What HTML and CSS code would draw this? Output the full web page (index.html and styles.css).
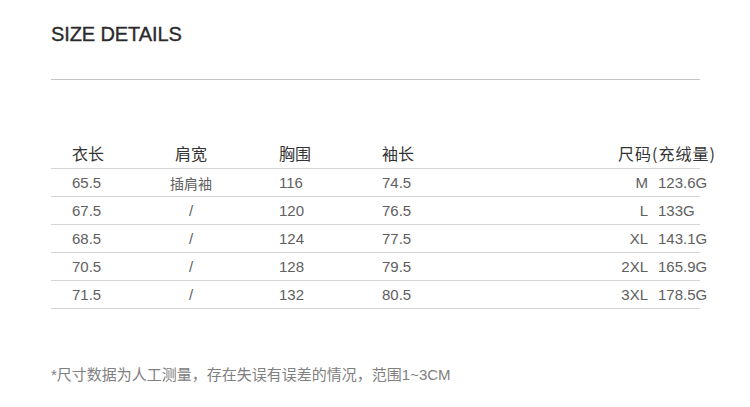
FILE: index.html
```html
<!DOCTYPE html>
<html lang="zh">
<head>
<meta charset="utf-8">
<link rel="stylesheet" href="styles.css">
</head>
<body>
<div class="page">
  <h1 class="title">SIZE DETAILS</h1>
  <div class="rule"></div>
  <div class="table">
    <div class="row head">
      <div class="c1">衣长</div>
      <div class="c2">肩宽</div>
      <div class="c3">胸围</div>
      <div class="c4">袖长</div>
      <div class="c5 hd">尺码(充绒量)</div>
    </div>
    <div class="row">
      <div class="c1">65.5</div>
      <div class="c2 cjk">插肩袖</div>
      <div class="c3">116</div>
      <div class="c4">74.5</div>
      <div class="c5"><span class="sz">M</span><span class="val">123.6G</span></div>
    </div>
    <div class="row">
      <div class="c1">67.5</div>
      <div class="c2">/</div>
      <div class="c3">120</div>
      <div class="c4">76.5</div>
      <div class="c5"><span class="sz">L</span><span class="val">133G</span></div>
    </div>
    <div class="row">
      <div class="c1">68.5</div>
      <div class="c2">/</div>
      <div class="c3">124</div>
      <div class="c4">77.5</div>
      <div class="c5"><span class="sz">XL</span><span class="val">143.1G</span></div>
    </div>
    <div class="row">
      <div class="c1">70.5</div>
      <div class="c2">/</div>
      <div class="c3">128</div>
      <div class="c4">79.5</div>
      <div class="c5"><span class="sz">2XL</span><span class="val">165.9G</span></div>
    </div>
    <div class="row">
      <div class="c1">71.5</div>
      <div class="c2">/</div>
      <div class="c3">132</div>
      <div class="c4">80.5</div>
      <div class="c5"><span class="sz">3XL</span><span class="val">178.5G</span></div>
    </div>
  </div>
  <p class="note">*尺寸数据为人工测量，存在失误有误差的情况，范围1~3CM</p>
</div>
</body>
</html>
```

FILE: styles.css
```css
html, body {
  margin: 0;
  padding: 0;
  background: #fff;
}

body {
  font-family: "Liberation Sans", "Noto Sans CJK SC", sans-serif;
}

.page {
  width: 649px;
  padding: 22px 0 0 51px;
}

.title {
  margin: 0;
  font-size: 20px;
  line-height: 24px;
  font-weight: normal;
  color: #2b2b2b;
  letter-spacing: -0.1px;
  -webkit-text-stroke: 0.35px #2b2b2b;
}

.rule {
  margin-top: 33px;
  height: 1px;
  background: #c4c4c4;
}

.table {
  margin-top: 58px;
}

.row {
  display: grid;
  grid-template-columns: 80px 120px 103px 254px 92px;
  align-items: center;
  height: 27px;
  border-bottom: 1px solid #d4d4d4;
  font-size: 15px;
  color: #606060;
}

.row.head {
  height: 30px;
  font-family: "Noto Sans CJK SC", sans-serif;
  font-size: 16px;
  color: #333;
}

.c1 {
  padding-left: 21px;
}

.c2 {
  text-align: center;
}

.c3 {
  padding-left: 28px;
}

.c4 {
  padding-left: 28px;
}

.c5 {
  display: flex;
  white-space: nowrap;
}

.c5.hd {
  padding-left: 10px;
  letter-spacing: 1px;
}

.cjk {
  font-family: "Noto Sans CJK SC", sans-serif;
  font-size: 14px;
}

.sz {
  flex: 0 0 40px;
  text-align: right;
}

.val {
  flex: 0 0 auto;
  padding-left: 10px;
}

.note {
  margin: 56px 0 0 0;
  font-family: "Liberation Sans", "Noto Sans CJK SC", sans-serif;
  font-size: 15px;
  line-height: 20px;
  color: #808080;
  white-space: nowrap;
}
```
